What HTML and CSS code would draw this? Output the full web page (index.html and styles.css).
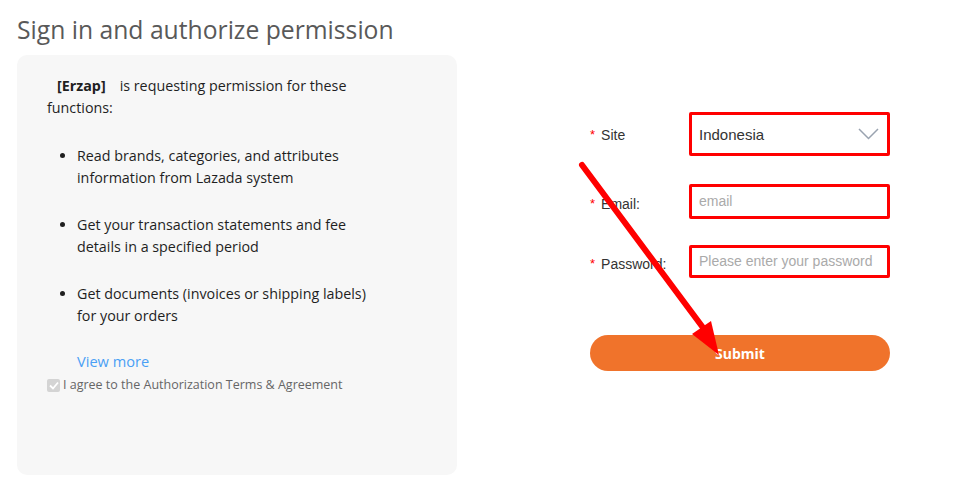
FILE: index.html
```html
<!DOCTYPE html>
<html>
<head>
<meta charset="utf-8">
<link rel="stylesheet" href="styles.css">
</head>
<body>
<div class="page">
  <h1 class="title">Sign in and authorize permission</h1>
  <div class="main">
    <div class="panel">
      <p class="intro"><b class="app">[Erzap]</b><span>is requesting permission for these</span><br><span>functions:</span></p>
      <ul class="perms">
        <li>Read brands, categories, and attributes information from Lazada system</li>
        <li>Get your transaction statements and fee details in a specified period</li>
        <li>Get documents (invoices or shipping labels) for your orders</li>
      </ul>
      <a class="more">View more</a>
      <label class="agree"><span class="check"><svg width="10" height="9" viewBox="0 0 10 9"><path d="M1 4.5 L4 7.5 L9 1.5" fill="none" stroke="#fff" stroke-width="1.8"/></svg></span>I agree to the Authorization Terms &amp; Agreement</label>
    </div>
    <div class="form">
      <div class="row row-site">
        <div class="label"><span class="req">*</span>Site</div>
        <div class="field field-select">
          <span class="val">Indonesia</span>
          <svg class="chev" width="21" height="12" viewBox="0 0 21 12"><path d="M1 1 L10.5 10.5 L20 1" fill="none" stroke="#9aa3b0" stroke-width="1.5"/></svg>
        </div>
      </div>
      <div class="row row-email">
        <div class="label lbl-low"><span class="req">*</span>Email:</div>
        <div class="field field-input"><span class="ph">email</span></div>
      </div>
      <div class="row row-pass">
        <div class="label lbl-low"><span class="req">*</span>Password:</div>
        <div class="field field-input"><span class="ph">Please enter your password</span></div>
      </div>
      <div class="submit">Submit</div>
    </div>
  </div>
</div>
<svg class="arrow" width="972" height="486" viewBox="0 0 972 486">
  <line x1="582" y1="165" x2="707" y2="333" stroke="#ff0000" stroke-width="6" stroke-linecap="round"/>
  <polygon points="719,355 692,334 711,321" fill="#ff0000"/>
</svg>
</body>
</html>
```
FILE: styles.css
```css
html, body { margin: 0; padding: 0; background: #fff; }
body { width: 972px; height: 486px; overflow: hidden; position: relative; }
.page { padding: 0 0 0 17px; }
.title {
  margin: 0;
  padding-top: 14px;
  height: 55px;
  box-sizing: border-box;
  font-family: "Open Sans", "Noto Sans", sans-serif;
  font-weight: 400;
  font-size: 24.7px;
  line-height: 32px;
  color: #595959;
}
.main { display: flex; }
.panel {
  width: 440px;
  height: 420px;
  box-sizing: border-box;
  background: #f7f7f7;
  border-radius: 10px;
  padding: 20px 30px 0 30px;
  font-family: "Open Sans", "Noto Sans", sans-serif;
  font-size: 14.3px;
  line-height: 22px;
  color: #1f1f1f;
}
.intro { margin: 0; width: 320px; }
.app { font-weight: 700; margin: 0 14px 0 10px; }
.perms { margin: 26px 0 0 0; padding: 0 0 0 30px; width: 310px; }
.perms li { margin-bottom: 25px; }
.more {
  display: block;
  margin-left: 30px;
  margin-top: -2px;
  color: #4a9ff5;
  font-size: 14.6px;
  line-height: 22px;
}
.agree {
  display: flex;
  align-items: center;
  font-size: 12.5px;
  line-height: 18px;
  color: #666;
  margin-top: 4px;
}
.check {
  width: 13px; height: 13px;
  background: #d4d4d4;
  border-radius: 2px;
  display: inline-flex;
  align-items: center;
  justify-content: center;
  margin-right: 3px;
}
.form {
  margin-left: 133px;
  width: 300px;
  padding-top: 57px;
  font-family: "Liberation Sans", Arial, sans-serif;
}
.row { display: flex; align-items: center; }
.row-site { height: 44px; }
.row-email { margin-top: 28px; height: 35px; }
.row-pass { margin-top: 26px; height: 33px; }
.label {
  width: 99px;
  font-size: 14px;
  color: #333;
  display: flex;
  align-items: center;
  padding-top: 1px;
}
.lbl-low { padding-top: 4px; }
.req { color: #f00; font-size: 13px; margin-right: 6px; }
.field {
  width: 201px;
  height: 100%;
  box-sizing: border-box;
  border: 3px solid #ff0000;
  border-radius: 2px;
  display: flex;
  align-items: center;
  padding-left: 7px;
}
.field-select { justify-content: space-between; padding-right: 8px; }
.field-input { padding-bottom: 2px; }
.val { font-size: 15px; color: #333; }
.ph { font-size: 14px; color: #aaa; }
.submit {
  margin-top: 57px;
  width: 300px;
  height: 36px;
  border-radius: 18px;
  background: #f0732b;
  color: #fff;
  font-family: "Open Sans", "Noto Sans", sans-serif;
  font-weight: 700;
  font-size: 14px;
  display: flex;
  align-items: center;
  justify-content: center;
}
.arrow { position: absolute; left: 0; top: 0; pointer-events: none; }
```
